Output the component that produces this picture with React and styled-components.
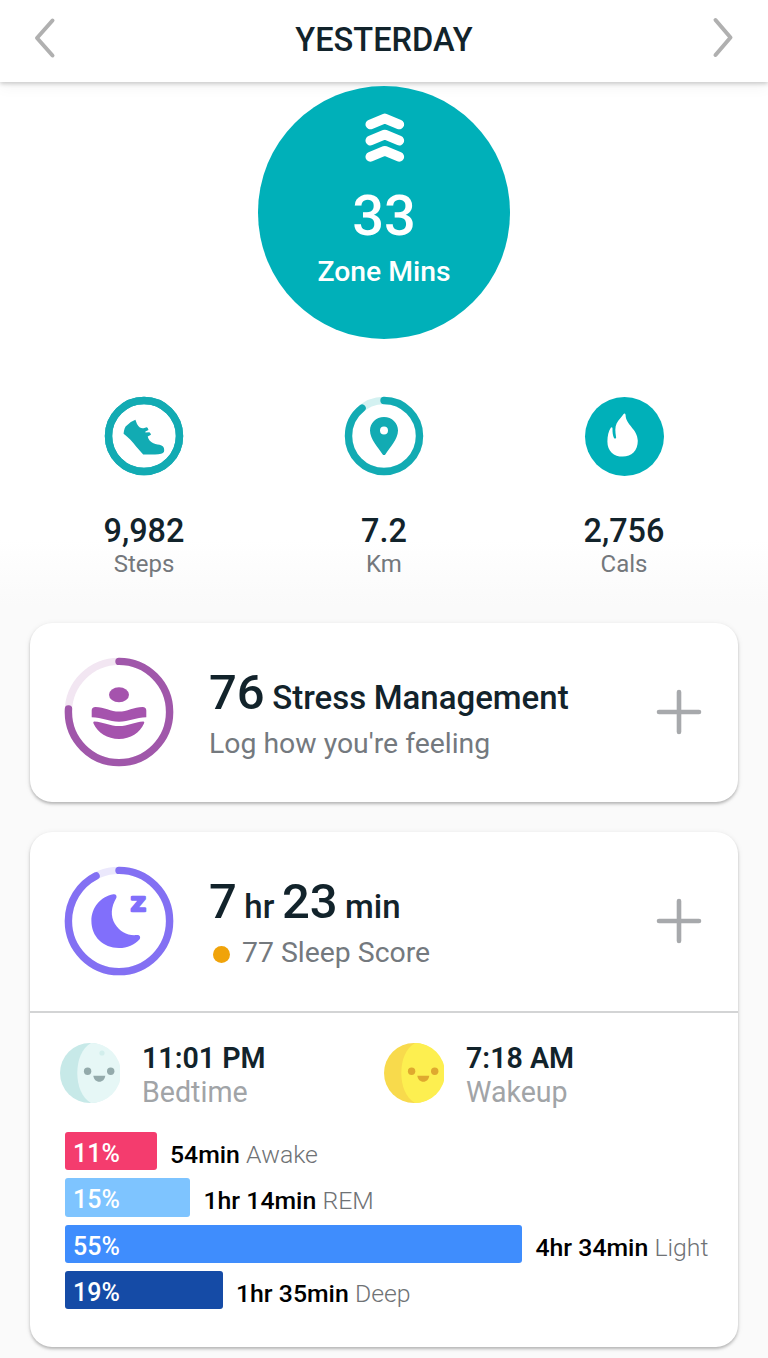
import React from "react";
import styled, { createGlobalStyle } from "styled-components";

const TEAL = "#00b0b9";
const INK = "#12232b";

const SLEEP_STAGES = [
  { key: "awake", percent: 11, width: 91.5, time: "54min", label: "Awake", color: "#f43c6e" },
  { key: "rem", percent: 15, width: 125, time: "1hr 14min", label: "REM", color: "#7ec4ff" },
  { key: "light", percent: 55, width: 457, time: "4hr 34min", label: "Light", color: "#3f8dfd" },
  { key: "deep", percent: 19, width: 157.5, time: "1hr 35min", label: "Deep", color: "#154ba6" },
];

const GlobalStyle = createGlobalStyle`
  * {
    box-sizing: border-box;
  }
  body {
    margin: 0;
    background: #fafafa;
    font-family: Roboto, "Liberation Sans", sans-serif;
    color: ${INK};
  }
  svg {
    display: block;
    flex-shrink: 0;
  }
`;

const Page = styled.div`
  width: 768px;
  height: 1358px;
  overflow: hidden;
  background: linear-gradient(#fff 540px, #fafafa 605px);
`;

const Header = styled.header`
  position: relative;
  display: flex;
  align-items: center;
  justify-content: space-between;
  height: 82px;
  padding: 0 32px 6px;
  background: #fff;
  box-shadow: 0 2px 4px rgba(0, 0, 0, 0.18), 0 6px 14px rgba(0, 0, 0, 0.04);
`;

const Title = styled.h1`
  margin: 0;
  padding-top: 4px;
  font-size: 32.6px;
  line-height: 40px;
  font-weight: 500;
`;

const ZoneCircle = styled.div`
  display: flex;
  flex-flow: column;
  align-items: center;
  position: relative;
  width: 252.5px;
  height: 252.5px;
  margin: 4px auto 0;
  padding-top: 26px;
  border-radius: 50%;
  background: ${TEAL};
  color: #fff;
  font-weight: 500;
  .value {
    margin-top: 22px;
    font-size: 56px;
    line-height: 60px;
  }
  .label {
    margin-top: 9px;
    font-size: 28.3px;
    line-height: 34px;
  }
`;

const Stats = styled.div`
  display: grid;
  grid-template-columns: repeat(3, 240px);
  justify-content: center;
  margin-top: 57.5px;
`;

const Stat = styled.div`
  display: flex;
  flex-flow: column;
  align-items: center;
  line-height: 34px;
  .value {
    margin-top: 38px;
    font-size: 32.4px;
    font-weight: 500;
  }
  .label {
    margin-top: -1px;
    font-size: 24px;
    color: #74787c;
  }
`;

const Cards = styled.main`
  display: flex;
  flex-flow: column;
  gap: 30px;
  padding: 42px 30px 0;
`;

const Card = styled.section`
  border-radius: 22px;
  background: #fff;
  box-shadow: 0 2px 3px rgba(0, 0, 0, 0.24), 0 1px 6px rgba(0, 0, 0, 0.07);
`;

const Summary = styled.div`
  display: flex;
  align-items: center;
  height: 179px;
  padding: 0 36px 1px 34px;
`;

const SummaryText = styled.div`
  flex: 1;
  padding: 5px 0 0 35px;
`;

const Headline = styled.div`
  font-size: 33px;
  line-height: 56px;
  font-weight: 500;
  white-space: nowrap;
  word-spacing: -0.7px;
  b {
    font-size: 49px;
    font-weight: 500;
  }
`;

const Subline = styled.div`
  display: flex;
  align-items: center;
  margin-top: -2px;
  font-size: 28.4px;
  line-height: 40px;
  color: #74797e;
`;

const ScoreDot = styled.span`
  width: 17px;
  height: 17px;
  margin: 3px 12px 0 4px;
  border-radius: 50%;
  background: #f0a30a;
`;

const Details = styled.div`
  height: 336px;
  padding: 30px 30px 0;
  border-top: 2px solid #d3d4d5;
`;

const Times = styled.div`
  display: grid;
  grid-template-columns: 324px 1fr;
`;

const TimeBlock = styled.div`
  display: flex;
  align-items: center;
  gap: 22px;
  height: 60px;
  font-size: 28.6px;
  line-height: 34px;
  .text {
    padding-top: 4px;
  }
  .time {
    font-weight: 600;
  }
  .label {
    color: #a1a4a7;
  }
`;

const Stages = styled.div`
  display: flex;
  flex-flow: column;
  gap: 8px;
  margin: 29px 0 0 5px;
`;

const Stage = styled.div`
  display: flex;
  align-items: center;
  height: 38.3px;
  font-size: 25px;
  white-space: nowrap;
`;

const Bar = styled.div`
  flex-shrink: 0;
  width: ${({ $width }) => $width}px;
  height: 100%;
  padding-left: 8px;
  border-radius: 3px;
  background: ${({ $color }) => $color};
  color: #fff;
  font-weight: 500;
  line-height: 43px;
`;

const StageText = styled.div`
  margin-left: 13.5px;
  padding-top: 7px;
  color: #000;
  font-size: 24.8px;
  font-weight: 500;
  span {
    color: #6f7275;
    font-weight: 300;
  }
`;

const Arrow = ({ d }) => (
  <svg width="24" height="44" viewBox="0 0 24 44">
    <path d={d} fill="none" stroke="#b0b0b0" strokeWidth="4" strokeLinecap="round" strokeLinejoin="round" />
  </svg>
);

// Progress starts at twelve o'clock and runs clockwise.
const Ring = ({ size, radius, stroke, color, track, progress, children }) => {
  const c = size / 2;
  return (
    <svg width={size} height={size} viewBox={`0 0 ${size} ${size}`}>
      <circle cx={c} cy={c} r={radius} fill="none" stroke={track} strokeWidth={stroke} />
      <circle
        cx={c}
        cy={c}
        r={radius}
        fill="none"
        stroke={color}
        strokeWidth={stroke}
        strokeLinecap="round"
        pathLength="100"
        strokeDasharray={`${progress} ${progress < 100 ? 100 : 0}`}
        transform={`rotate(-90 ${c} ${c})`}
      />
      {children}
    </svg>
  );
};

const Face = ({ dark, light, feature, spot }) => (
  <svg width="60" height="60" viewBox="0 0 60 60">
    <circle cx="30" cy="30" r="30" fill={dark} />
    <path d="M31 0A30 30 0 0 1 31 60C22 55 17.3 43 17.3 30S22 5 31 0Z" fill={light} />
    {spot && <circle cx="42" cy="10" r="2.6" fill={spot} />}
    <circle cx="27.6" cy="28.3" r="3.7" fill={feature} />
    <circle cx="50.7" cy="28.3" r="3.7" fill={feature} />
    <path d="M33.3 32.8H45.3C44.8 36.6 42.4 38.8 39.3 38.8S33.8 36.6 33.3 32.8Z" fill={feature} />
  </svg>
);

const Plus = () => (
  <svg width="46" height="46" viewBox="0 0 46 46">
    <path d="M23 3V43M3 23H43" stroke="#a7a9ac" strokeWidth="4.6" strokeLinecap="round" />
  </svg>
);

export default function App() {
  return (
    <Page>
      <GlobalStyle />
      <Header>
        <Arrow d="M20.5 4.5L5 22L20.5 39.5" />
        <Title>YESTERDAY</Title>
        <Arrow d="M3.5 4L18.5 21.5L3.5 39" />
      </Header>

      <ZoneCircle>
        <svg width="42" height="52" viewBox="0 0 42 52">
          <g fill="none" stroke="#fff" strokeWidth="9.8" strokeLinecap="round" strokeLinejoin="round">
            <path d="M7.4 12.4L21.8 6.4L36.2 12.4" />
            <path d="M7.4 28.6L21.8 22.6L36.2 28.6" />
            <path d="M7.4 44.8L21.8 38.8L36.2 44.8" />
          </g>
        </svg>
        <div className="value">33</div>
        <div className="label">Zone Mins</div>
      </ZoneCircle>

      <Stats>
        <Stat>
          <Ring size={80} radius={35.5} stroke={7.4} color="#12abb3" track="#12abb3" progress={100}>
            <path
              d="M31.4 23.8L33 28C34.5 31 37 32.6 39.5 32.2L42.8 31.2Q43.8 31.4 44.5 34L41.4 35.4V36.6L45.4 36.2Q46.6 37 47 38.8L43.7 40.5C44.2 43.4 46.4 45.8 49.4 47.2C52 48.4 55 48.4 57.5 49.4C60 50.6 60.6 53 60 55.8C59.2 57.6 56 58.5 51 58.5H39.2L32.3 50.7C28.5 45.5 24 41 19.6 37.8C19.8 35 20.2 33 21.6 30.4Q26 25.6 31.4 23.8Z"
              fill="#12abb3"
            />
          </Ring>
          <div className="value">9,982</div>
          <div className="label">Steps</div>
        </Stat>
        <Stat>
          <Ring size={80} radius={35.5} stroke={7.4} color="#12abb3" track="#d3f1f1" progress={89.4}>
            <path
              fillRule="evenodd"
              d="M40 21C32 21 26 27 26 34.6C26 43.5 34.5 52 38.5 58.2Q40 60 41.5 58.2C45.5 52 54 43.5 54 34.6C54 27 48 21 40 21ZM40 30.4A4 4 0 1 1 40 38.4A4 4 0 1 1 40 30.4Z"
              fill="#12abb3"
            />
          </Ring>
          <div className="value">7.2</div>
          <div className="label">Km</div>
        </Stat>
        <Stat>
          <svg width="80" height="80" viewBox="0 0 80 80">
            <circle cx="40.5" cy="40.5" r="39.5" fill={TEAL} />
            <path
              d="M39.6 18C40.6 17 41.4 17.4 41.6 19C41.6 29 53.8 33 53.8 44.8C53.8 54.8 47.5 60.6 38.8 60.6C29.8 60.6 23.4 55 23.4 45.4C23.4 40 24.6 35 26.8 31.8C27.6 30.8 28.4 31.2 28.5 32.4C28.4 36 28.8 39.4 30 42C30.7 43 32.3 42.6 32.1 41.4C31.2 35.5 30.8 31 32.6 27.4C34.6 23.6 37.6 21.4 39.6 18Z"
              fill="#fff"
            />
          </svg>
          <div className="value">2,756</div>
          <div className="label">Cals</div>
        </Stat>
      </Stats>

      <Cards>
        <Card>
          <Summary>
            <Ring size={110} radius={50.6} stroke={7.4} color="#a057aa" track="#f2e6f2" progress={76}>
              <g fill="#a553ad">
                <ellipse cx="55" cy="37.7" rx="10" ry="7.5" />
                <path d="M31.5 50C40 50 47 54.6 55 54.6S70 50 78.5 50Q82.3 50 82.3 53.5V60.3C72 60.3 65 64.7 55 64.7S38 60.3 27.7 60.3V53.5Q27.7 50 31.5 50Z" />
                <path d="M30 64.4C40 65 46 69 55 69S70 65 79.5 64.4Q80.9 64.6 80 66.6C76 76 66.5 82 55 82S33.5 76 29.5 66.6Q28.8 64.6 30 64.4Z" />
              </g>
            </Ring>
            <SummaryText>
              <Headline>
                <b>76</b> Stress Management
              </Headline>
              <Subline>Log how you're feeling</Subline>
            </SummaryText>
            <Plus />
          </Summary>
        </Card>

        <Card>
          <Summary>
            <Ring size={110} radius={50.6} stroke={7.4} color="#8370f3" track="#ebe8fc" progress={92.5}>
              <path
                d="M49.3 28.2C51.8 27.8 53 29.4 52.4 31.8C47 41 46.2 50 51 58C56 66.2 64 70 73 69C75.8 69 77 71 75.6 73.2C70.5 79 63.4 82 55 82C39 82 27.4 70.5 27.4 55C27.4 41.5 36.5 30.5 49.3 28.2Z"
                fill="#816ffb"
              />
              <text
                x="66.8"
                y="44.8"
                textLength="15"
                lengthAdjust="spacingAndGlyphs"
                fill="#816ffb"
                stroke="#816ffb"
                strokeWidth="2.4"
                strokeLinejoin="round"
                fontSize="25.4"
                fontWeight="500"
              >
                z
              </text>
            </Ring>
            <SummaryText>
              <Headline>
                <b>7</b> hr <b>23</b> min
              </Headline>
              <Subline>
                <ScoreDot />
                77 Sleep Score
              </Subline>
            </SummaryText>
            <Plus />
          </Summary>
          <Details>
            <Times>
              <TimeBlock>
                <Face dark="#c7e9e8" light="#e6f7f6" feature="#93aaab" spot="#d2eeec" />
                <div className="text">
                  <div className="time">11:01 PM</div>
                  <div className="label">Bedtime</div>
                </div>
              </TimeBlock>
              <TimeBlock>
                <Face dark="#f8da4c" light="#fdef50" feature="#dfa92f" />
                <div className="text">
                  <div className="time">7:18 AM</div>
                  <div className="label">Wakeup</div>
                </div>
              </TimeBlock>
            </Times>
            <Stages>
              {SLEEP_STAGES.map((stage) => (
                <Stage key={stage.key}>
                  <Bar $width={stage.width} $color={stage.color}>
                    {stage.percent}%
                  </Bar>
                  <StageText>
                    {stage.time} <span>{stage.label}</span>
                  </StageText>
                </Stage>
              ))}
            </Stages>
          </Details>
        </Card>
      </Cards>
    </Page>
  );
}
